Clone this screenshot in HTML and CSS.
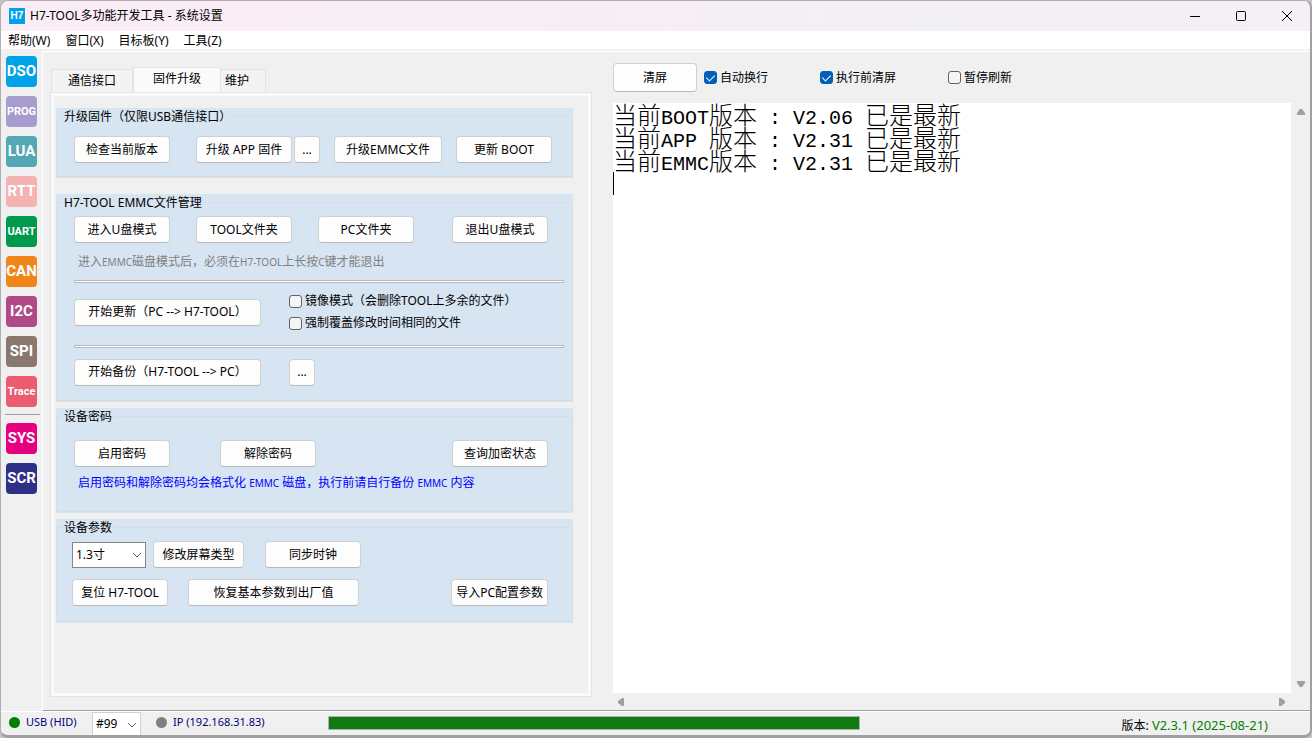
FILE: index.html
```html
<!DOCTYPE html>
<html lang="zh-CN">
<head>
    <meta charset="UTF-8">
    <meta name="viewport" content="width=device-width, initial-scale=1.0">
    <title>H7-TOOL多功能开发工具 - 系统设置</title>
    <link rel="stylesheet" href="styles.css">
</head>
<body>
    <div class="window">
        <header class="titlebar">
            <span class="logo">H7</span>
            <h1>H7-TOOL多功能开发工具 - 系统设置</h1>
            <div class="window-buttons">
                <button type="button" aria-label="最小化"><svg width="12" height="12" viewBox="0 0 12 12"><path d="M1 6.5h10"/></svg></button>
                <button type="button" aria-label="最大化"><svg width="12" height="12" viewBox="0 0 12 12"><rect x="1.5" y="1.5" width="9" height="9" rx="1"/></svg></button>
                <button type="button" aria-label="关闭"><svg width="12" height="12" viewBox="0 0 12 12"><path d="M1 1l10 10M11 1L1 11"/></svg></button>
            </div>
        </header>

        <nav class="menubar">
            <a href="#">帮助(W)</a>
            <a href="#">窗口(X)</a>
            <a href="#">目标板(Y)</a>
            <a href="#">工具(Z)</a>
        </nav>

        <div class="workspace">
            <!-- Module switcher -->
            <nav class="rail">
                <button type="button" class="dso">DSO</button>
                <button type="button" class="prog tight">PROG</button>
                <button type="button" class="lua">LUA</button>
                <button type="button" class="rtt">RTT</button>
                <button type="button" class="uart tight">UART</button>
                <button type="button" class="can">CAN</button>
                <button type="button" class="i2c">I2C</button>
                <button type="button" class="spi">SPI</button>
                <button type="button" class="trace tight">Trace</button>
                <hr>
                <button type="button" class="sys">SYS</button>
                <button type="button" class="scr">SCR</button>
            </nav>

            <main class="content">
                <section class="settings">
                    <div class="tabs" role="tablist">
                        <button type="button" role="tab" class="tab">通信接口</button>
                        <button type="button" role="tab" class="tab active" aria-selected="true">固件升级</button>
                        <button type="button" role="tab" class="tab short">维护</button>
                    </div>
                    <div class="tab-page" role="tabpanel">
                        <div class="group upgrade">
                            <fieldset>
                                <legend>升级固件（仅限USB通信接口）</legend>
                                <div class="row">
                                    <button type="button" class="btn">检查当前版本</button>
                                    <div class="pair">
                                        <button type="button" class="btn">升级 APP 固件</button>
                                        <button type="button" class="btn dots">...</button>
                                    </div>
                                    <button type="button" class="btn mid">升级EMMC文件</button>
                                    <button type="button" class="btn">更新 BOOT</button>
                                </div>
                            </fieldset>
                        </div>

                        <div class="group files">
                            <fieldset>
                                <legend>H7-TOOL EMMC文件管理</legend>
                                <div class="row">
                                    <button type="button" class="btn">进入U盘模式</button>
                                    <button type="button" class="btn">TOOL文件夹</button>
                                    <button type="button" class="btn">PC文件夹</button>
                                    <button type="button" class="btn last">退出U盘模式</button>
                                </div>
                                <p class="note">进入<small>EMMC</small>磁盘模式后，必须在<small>H7-TOOL</small>上长按<small>C</small>键才能退出</p>
                                <hr class="rule">
                                <div class="row sync">
                                    <button type="button" class="btn wide">开始更新（PC --&gt; H7-TOOL）</button>
                                    <div class="options">
                                        <label><input type="checkbox">镜像模式（会删除TOOL上多余的文件）</label>
                                        <label><input type="checkbox">强制覆盖修改时间相同的文件</label>
                                    </div>
                                </div>
                                <hr class="rule">
                                <div class="row sync">
                                    <button type="button" class="btn wide">开始备份（H7-TOOL --&gt; PC）</button>
                                    <button type="button" class="btn dots">...</button>
                                </div>
                            </fieldset>
                        </div>

                        <div class="group password">
                            <fieldset>
                                <legend>设备密码</legend>
                                <div class="row">
                                    <button type="button" class="btn">启用密码</button>
                                    <button type="button" class="btn">解除密码</button>
                                    <button type="button" class="btn last">查询加密状态</button>
                                </div>
                                <p class="note warn">启用密码和解除密码均会格式化 <small>EMMC</small> 磁盘，执行前请自行备份 <small>EMMC</small> 内容</p>
                            </fieldset>
                        </div>

                        <div class="group params">
                            <fieldset>
                                <legend>设备参数</legend>
                                <div class="row screen">
                                    <div class="combo">
                                        <select aria-label="屏幕类型"><option>1.3寸</option></select>
                                        <svg width="10" height="6" viewBox="0 0 10 6"><path d="M1 1l4 4 4-4"/></svg>
                                    </div>
                                    <button type="button" class="btn">修改屏幕类型</button>
                                    <button type="button" class="btn clock">同步时钟</button>
                                </div>
                                <div class="row reset">
                                    <button type="button" class="btn">复位 H7-TOOL</button>
                                    <button type="button" class="btn wide">恢复基本参数到出厂值</button>
                                    <button type="button" class="btn last">导入PC配置参数</button>
                                </div>
                            </fieldset>
                        </div>
                    </div>
                </section>

                <section class="output">
                    <div class="output-tools">
                        <button type="button" class="btn clear">清屏</button>
                        <label><input type="checkbox" checked>自动换行</label>
                        <label><input type="checkbox" checked>执行前清屏</label>
                        <label><input type="checkbox">暂停刷新</label>
                    </div>
                    <div class="console">
                        <div class="log" role="textbox" aria-multiline="true" aria-label="输出" contenteditable="true" spellcheck="false"><div>当前<code>BOOT</code>版本<code> : V2.06 </code>已是最新</div><div>当前<code>APP </code>版本<code> : V2.31 </code>已是最新</div><div>当前<code>EMMC</code>版本<code> : V2.31 </code>已是最新</div><div class="caret"></div></div>
                        <div class="scroll vertical">
                            <svg width="8" height="6" viewBox="0 0 8 6"><path d="M3 0h2l3 4v2H0V4z"/></svg>
                            <svg width="8" height="6" viewBox="0 0 8 6"><path d="M0 0h8v2L5 6H3L0 2z"/></svg>
                        </div>
                        <div class="scroll horizontal">
                            <svg width="6" height="8" viewBox="0 0 6 8"><path d="M6 0v8H4L0 5V3l4-3z"/></svg>
                            <svg width="6" height="8" viewBox="0 0 6 8"><path d="M0 0h2l4 3v2L2 8H0z"/></svg>
                        </div>
                    </div>
                </section>
            </main>
        </div>

        <footer class="statusbar">
            <span class="link"><i class="dot on"></i>USB (HID)</span>
            <div class="combo device">
                <select aria-label="设备编号"><option>#99</option></select>
                <svg width="10" height="6" viewBox="0 0 10 6"><path d="M1 1l4 4 4-4"/></svg>
            </div>
            <span class="link ip"><i class="dot"></i>IP (192.168.31.83)</span>
            <progress value="100" max="100" aria-label="进度"></progress>
            <span class="version">版本: <b>V2.3.1 (2025-08-21)</b></span>
        </footer>
    </div>
</body>
</html>
```
FILE: styles.css
```css
* {
    box-sizing: border-box;
}
body {
    margin: 0;
    background: #c4c4c4;
    color: #000;
    font-family: "Noto Sans", "Noto Sans CJK SC", sans-serif;
    font-size: 12px;
    line-height: 16px;
}
button, select, input {
    font: inherit;
    color: inherit;
    margin: 0;
}
.window {
    display: flex;
    flex-direction: column;
    height: 100vh;
    border: 1px solid #b0aeb0;
    border-right: 2px solid #a0a0a0;
    border-bottom: 3px solid #a0a0a0;
    border-radius: 8px;
    background: #f0f0f0;
    overflow: hidden;
}

/* Title and menu */
.titlebar {
    display: flex;
    align-items: center;
    flex: none;
    height: 30px;
    padding-left: 8px;
    background: linear-gradient(90deg, #faedf6, #f9edf6 40%, #f3eff7 70%, #f5eff7);
}
.logo {
    width: 16px;
    height: 16px;
    margin-right: 5px;
    background: #00a2e8;
    color: #fff;
    font: bold 10px/16px "Liberation Sans", sans-serif;
    text-align: center;
}
.titlebar h1 {
    margin: 0;
    font-size: 12px;
    font-weight: normal;
}
.window-buttons {
    display: flex;
    margin-left: auto;
}
.window-buttons button {
    display: flex;
    align-items: center;
    justify-content: center;
    width: 46px;
    height: 28px;
    padding: 0;
    border: 0;
    background: none;
}
.window-buttons svg {
    fill: none;
    stroke: #000;
}
.menubar {
    display: flex;
    align-items: center;
    gap: 15px;
    flex: none;
    height: 18px;
    padding: 2px 7px 0;
    background: #fff;
}
.menubar a {
    color: #000;
    text-decoration: none;
}

/* Module rail */
.workspace {
    display: flex;
    flex: 1;
    min-height: 0;
    padding-top: 2px;
}
.rail {
    display: flex;
    flex-direction: column;
    gap: 9px;
    flex: none;
    width: 41px;
    padding: 5px 5px 0;
}
.rail button {
    flex: none;
    width: 31px;
    height: 31px;
    padding: 0;
    border: 0;
    border-radius: 4px;
    color: #fff;
    font: bold 15px/31px Roboto, "Liberation Sans", sans-serif;
    text-align: center;
}
.rail .tight {
    font-size: 11px;
}
.rail hr {
    width: 35px;
    height: 1px;
    margin: -2px 0 -1px -1px;
    border: 0;
    background: #a0a0a0;
}
.dso { background: #00a2e8; }
.prog { background: #a89bcd; }
.lua { background: #54a8b5; }
.rtt { background: #f4b2b2; }
.uart { background: #009a4e; }
.can { background: #f08519; }
.i2c { background: #b04a87; }
.spi { background: #8a786f; }
.trace { background: #eb5c70; }
.sys { background: #e4007f; }
.scr { background: #2e3087; }

.content {
    display: flex;
    gap: 21px;
    flex: 1;
    min-width: 0;
    padding: 11px 18px 0 7px;
    border-top: 1px solid #fff;
    border-left: 1px solid #fff;
    border-bottom: 1px solid #a0a0a0;
}

/* Buttons and tick boxes */
.btn {
    flex: none;
    min-width: 96px;
    height: 27px;
    padding: 0 4px;
    border: 1px solid #d0d0d0;
    border-bottom-color: #b8b8b8;
    border-radius: 4px;
    background: #fdfdfd;
    text-align: center;
    white-space: nowrap;
}
.btn.dots {
    min-width: 26px;
}
.btn.mid {
    min-width: 108px;
}
label {
    display: flex;
    align-items: center;
    gap: 3px;
    white-space: nowrap;
}
input[type="checkbox"] {
    appearance: none;
    display: flex;
    justify-content: center;
    width: 13px;
    height: 13px;
    border: 1px solid #626262;
    border-radius: 3px;
    background: #f5f5f5;
}
input[type="checkbox"]:checked {
    border-color: #005fb8;
    background: #005fb8;
}
input[type="checkbox"]:checked::before {
    content: "";
    width: 4px;
    height: 7px;
    margin-top: 1px;
    border: solid #fff;
    border-width: 0 1px 1px 0;
    transform: rotate(45deg);
}

/* Settings tabs */
.settings {
    display: flex;
    flex-direction: column;
    flex: none;
    width: 542px;
    padding: 4px 0 13px;
}
.tabs {
    display: flex;
    align-items: flex-end;
    padding-left: 1px;
}
.tab {
    width: 82px;
    height: 23px;
    padding: 0;
    border: 1px solid #e3e3e3;
    border-bottom: 0;
    background: #f3f3f3;
}
.tab.active {
    width: 88px;
    height: 26px;
    margin-bottom: -1px;
    padding-bottom: 3px;
    background: #fafafa;
}
.tab.short {
    width: 45px;
    padding-right: 12px;
    border-left: 0;
}
.tab-page {
    flex: 1;
    padding: 12px 18px 0 3px;
    border: 1px solid #e3e3e3;
    box-shadow: inset 0 0 0 3px #fafafa;
}
.group {
    margin: 0 0 6px 2px;
    padding-bottom: 1px;
    background: #d7e4f2;
}
.group fieldset {
    min-width: 0;
    height: 100%;
    margin: 0;
    padding: 0 8px 0 17px;
    border: 1px solid #dcdcdc;
}
.group legend {
    height: 16px;
    margin-left: -11px;
    padding: 0 1px;
    background: #d7e4f2;
    line-height: 18px;
}
.upgrade {
    height: 70px;
    margin-top: 3px;
    margin-bottom: 16px;
}
.files {
    height: 208px;
}
.password {
    height: 105px;
}
.params {
    height: 104px;
}
.row {
    display: flex;
    align-items: center;
    gap: 26px;
    margin-right: 16px;
}
.row .last {
    margin-left: auto;
}
.upgrade .row {
    gap: 14px;
    margin-top: 12px;
    margin-right: 0;
}
.pair {
    display: flex;
    gap: 2px;
    margin-left: 12px;
}
.files .row {
    margin-top: 6px;
}
.note {
    margin: 11px 0 10px 4px;
    color: #808080;
    white-space: nowrap;
}
.note small {
    font-size: 10px;
}
.rule {
    height: 3px;
    margin: 0;
    border: 1px solid #b8b8b8;
    background: #fff;
}
.files .sync {
    height: 62px;
    margin-top: 0;
    padding-bottom: 4px;
    gap: 28px;
}
.files .sync:last-child {
    height: 52px;
}
.sync .wide {
    min-width: 187px;
}
.options {
    display: flex;
    flex-direction: column;
    gap: 6px;
}
.password .row {
    gap: 50px;
    margin-top: 16px;
}
.note.warn {
    margin-top: 8px;
    color: #00f;
}
.params .row {
    margin-left: -2px;
}
.params .screen {
    gap: 7px;
    margin-top: 6px;
}
.params .clock {
    margin-left: 14px;
}
.params .screen .btn:not(.clock) {
    min-width: 91px;
}
.params .reset {
    gap: 20px;
    margin-top: 11px;
}
.reset .wide {
    min-width: 171px;
}
.combo {
    position: relative;
    width: 74px;
}
.combo select {
    display: block;
    width: 100%;
    height: 26px;
    padding: 0 3px;
    appearance: none;
    border: 1px solid #868686;
    border-radius: 0;
    background: #fff;
}
.combo svg {
    position: absolute;
    right: 4px;
    top: 10px;
    fill: none;
    stroke: #606060;
    pointer-events: none;
}

/* Output side */
.output {
    display: flex;
    flex-direction: column;
    flex: 1;
    min-width: 0;
}
.output-tools {
    display: flex;
    align-items: center;
    height: 29px;
    margin-bottom: 11px;
}
.output-tools .clear {
    min-width: 84px;
    height: 29px;
    margin-right: 7px;
}
.output-tools label {
    margin-right: 52px;
}
.console {
    display: grid;
    grid-template-columns: 1fr 19px;
    grid-template-rows: 1fr 17px;
    flex: 1;
    margin-right: -18px;
}
.log {
    background: #fff;
    font-size: 24px;
    font-weight: 300;
    line-height: 23px;
    white-space: pre;
    outline: 0;
}
.log div {
    height: 23px;
}
.log code {
    font-family: "Liberation Mono", monospace;
    font-size: 20px;
    font-weight: 400;
}
.log .caret {
    border-left: 1px solid #000;
}
.scroll {
    display: flex;
    align-items: center;
    justify-content: space-between;
    fill: #a0a0a0;
}
.scroll.vertical {
    flex-direction: column;
    padding: 6px 0;
}
.scroll.horizontal {
    padding: 0 6px 0 5px;
}

/* Status bar */
.statusbar {
    display: flex;
    align-items: center;
    flex: none;
    height: 24px;
    border-top: 1px solid #fff;
}
.link {
    display: flex;
    align-items: center;
    gap: 6px;
    flex: none;
    width: 91px;
    padding: 0 0 3px 8px;
    color: #000080;
    font-size: 11px;
}
.link.ip {
    width: 187px;
    padding-left: 15px;
}
.dot {
    width: 11px;
    height: 11px;
    border-radius: 50%;
    background: #808080;
}
.dot.on {
    background: #008000;
}
.combo.device {
    width: 49px;
}
.device select {
    height: 24px;
    border-color: #d0d0d0;
}
progress {
    appearance: none;
    flex: 0 1 532px;
    height: 14px;
    margin-bottom: 1px;
    border: 1px solid #b0b0b0;
}
progress::-webkit-progress-bar {
    background: #e6e6e6;
}
progress::-webkit-progress-value {
    background: #107c10;
}
.version {
    margin: 4px 42px 0 auto;
    white-space: nowrap;
}
.version b {
    color: #008000;
    font-size: 13px;
    font-weight: normal;
}
```
